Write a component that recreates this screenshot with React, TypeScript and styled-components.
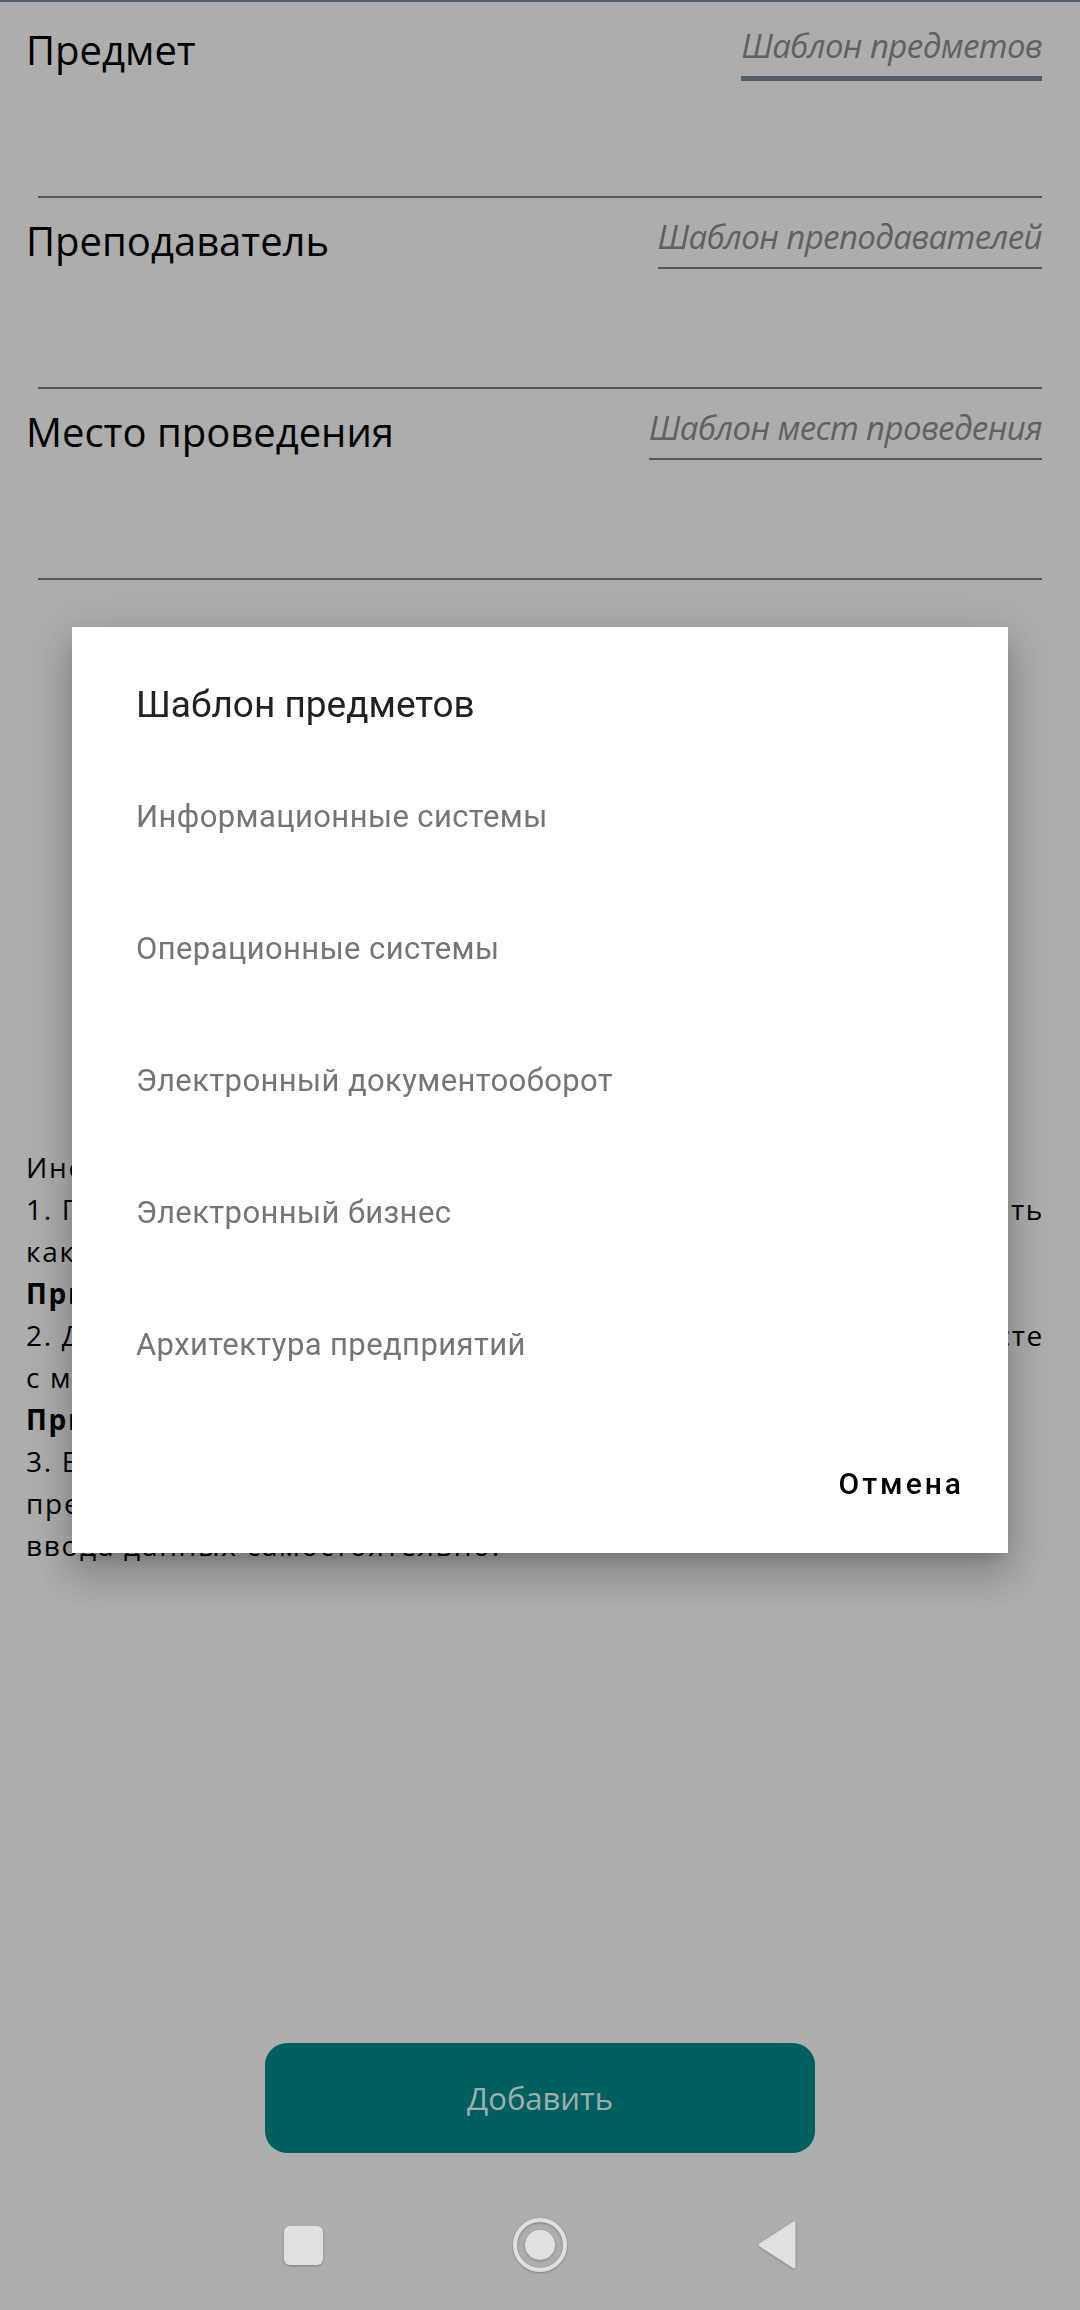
import React from 'react';
import styled, { createGlobalStyle } from 'styled-components';

// Template choices shown in the dialog
const subjectTemplates = [
  'Информационные системы',
  'Операционные системы',
  'Электронный документооборот',
  'Электронный бизнес',
  'Архитектура предприятий',
];

interface Field {
  label: string;
  template: string;
  active?: boolean;
}

const fields: Field[] = [
  { label: 'Предмет', template: 'Шаблон предметов', active: true },
  { label: 'Преподаватель', template: 'Шаблон преподавателей' },
  { label: 'Место проведения', template: 'Шаблон мест проведения' },
];

const GlobalStyle = createGlobalStyle`
  html, body {
    margin: 0;
    padding: 0;
    background: #ffffff;
  }
  body {
    font-family: 'Open Sans', 'Noto Sans', sans-serif;
    color: #000000;
  }
  * {
    box-sizing: border-box;
  }
`;

const App: React.FC = () => {
  return (
    <>
      <GlobalStyle />
      <Screen>
        <Form>
          {fields.map((field) => (
            <FieldBlock key={field.label}>
              <FieldHeader>
                <Label>{field.label}</Label>
                <TemplateLink $active={field.active}>{field.template}</TemplateLink>
              </FieldHeader>
              <FieldInput type="text" aria-label={field.label} />
            </FieldBlock>
          ))}
        </Form>

        <Instructions>
          <InstructionLine>Инструкция по заполнению полей:</InstructionLine>
          <InstructionLine $fill>
            <span>1. Поле «Предмет» можно выбрать из шаблона или</span> <span>заполнить</span>
          </InstructionLine>
          <InstructionLine>как угодно самостоятельно.</InstructionLine>
          <InstructionLine>
            <strong>Пример:</strong> «Информационные системы».
          </InstructionLine>
          <InstructionLine $fill>
            <span>2. Для полей «Преподаватель» и «Место проведения» в</span> <span>тексте</span>
          </InstructionLine>
          <InstructionLine>с маленькой буквы сокращения не используются.</InstructionLine>
          <InstructionLine>
            <strong>Пример:</strong> «доц. Иванов И.И.», «ауд. 305».
          </InstructionLine>
          <InstructionLine>3. Если нужного шаблона нет в списке, вы можете указать</InstructionLine>
          <InstructionLine>предмет, преподавателя и место проведения в полях</InstructionLine>
          <InstructionLine>ввода данных самостоятельно.</InstructionLine>
        </Instructions>

        <Spacer />

        <ButtonRow>
          <AddButton type="button">Добавить</AddButton>
        </ButtonRow>

        <NavBar>
          <svg width="41" height="41" viewBox="0 0 41 41">
            <rect x="1" y="1" width="39" height="39" rx="6" fill="#e0e0e0" />
          </svg>
          <svg width="56" height="56" viewBox="0 0 56 56">
            <circle cx="28" cy="28" r="25" fill="none" stroke="#e0e0e0" strokeWidth="4" />
            <circle cx="28" cy="28" r="15" fill="#e0e0e0" />
          </svg>
          <svg width="40" height="48" viewBox="0 0 40 48">
            <path
              d="M3 24 L37 2 L37 46 Z"
              fill="#e0e0e0"
              stroke="#e0e0e0"
              strokeWidth="3"
              strokeLinejoin="round"
            />
          </svg>
        </NavBar>
      </Screen>

      <Scrim>
        <Dialog role="dialog" aria-labelledby="dialog-title">
          <DialogTitle id="dialog-title">Шаблон предметов</DialogTitle>
          <OptionList>
            {subjectTemplates.map((item) => (
              <OptionItem key={item}>{item}</OptionItem>
            ))}
          </OptionList>
          <DialogFooter>
            <CancelButton type="button">Отмена</CancelButton>
          </DialogFooter>
        </Dialog>
      </Scrim>
    </>
  );
};

export default App;

const Screen = styled.div`
  width: 1080px;
  min-height: 100vh;
  display: flex;
  flex-direction: column;
  border-top: 2px solid #7c879c;
  background: #ffffff;
`;

const Form = styled.div`
  padding: 5px 38px 0 26px;
`;

const FieldBlock = styled.div`
  padding-top: 16px;
`;

const FieldHeader = styled.div`
  height: 58px;
  display: flex;
  justify-content: space-between;
  align-items: flex-start;
`;

const Label = styled.span`
  font-size: 40px;
  line-height: 1.362;
  color: #000000;
`;

const TemplateLink = styled.span<{ $active?: boolean }>`
  margin-top: 1px;
  font-size: 33px;
  line-height: 1.362;
  letter-spacing: -0.6px;
  font-style: italic;
  color: #8e8e8e;
  padding-bottom: 7px;
  border-bottom: ${(p) => (p.$active ? '5px solid #7c899a' : '2px solid #808080')};
`;

const FieldInput = styled.input`
  display: block;
  width: calc(100% - 12px);
  height: 117px;
  margin: 0 0 0 12px;
  padding: 0;
  border: none;
  border-bottom: 2px solid #808080;
  background: transparent;
  outline: none;
`;

const Instructions = styled.div`
  margin-top: 566px;
  padding: 0 36px 0 26px;
  font-size: 28px;
  line-height: 42px;
  letter-spacing: 1.7px;
  color: #000000;

  strong {
    font-weight: 700;
  }
`;

// Lines that run to the right edge keep their last word flush right
const InstructionLine = styled.div<{ $fill?: boolean }>`
  display: ${(p) => (p.$fill ? 'flex' : 'block')};
  justify-content: space-between;
  white-space: ${(p) => (p.$fill ? 'nowrap' : 'normal')};
`;

const Spacer = styled.div`
  flex: 1;
`;

const ButtonRow = styled.div`
  display: flex;
  justify-content: center;
  padding-bottom: 27px;
`;

const AddButton = styled.button`
  width: 550px;
  height: 110px;
  border: none;
  border-radius: 22px;
  background: #008c8c;
  color: #eaffff;
  font-family: 'Open Sans', 'Noto Sans', sans-serif;
  font-size: 31px;
`;

const NavBar = styled.div`
  position: relative;
  z-index: 20;
  height: 130px;
  display: grid;
  grid-template-columns: repeat(3, 237px);
  justify-content: center;
  justify-items: center;
  align-items: center;

  svg {
    filter: drop-shadow(0 1px 1px rgba(0, 0, 0, 0.25));
  }
`;

const Scrim = styled.div`
  position: fixed;
  inset: 0;
  z-index: 10;
  background: rgba(0, 0, 0, 0.32);
  display: flex;
  align-items: center;
  justify-content: center;
  padding-bottom: 130px;
`;

const Dialog = styled.div`
  width: 936px;
  background: #ffffff;
  padding: 57px 0 0 64px;
  box-shadow: 0 11px 15px -7px rgba(0, 0, 0, 0.2), 0 24px 38px 3px rgba(0, 0, 0, 0.14),
    0 9px 46px 8px rgba(0, 0, 0, 0.12);
  font-family: Roboto, 'Noto Sans', sans-serif;
`;

const DialogTitle = styled.h2`
  margin: 0;
  font-size: 37px;
  font-weight: 400;
  line-height: 1.14;
  color: #212121;
`;

const OptionList = styled.ul`
  list-style: none;
  margin: 25px 0 0;
  padding: 0;
`;

const OptionItem = styled.li`
  height: 132px;
  display: flex;
  align-items: center;
  font-size: 31px;
  line-height: 1.1;
  letter-spacing: 0.4px;
  color: #757575;
`;

const DialogFooter = styled.div`
  display: flex;
  justify-content: flex-end;
  padding: 24px 44px 22px 0;
`;

const CancelButton = styled.button`
  height: 96px;
  padding: 0;
  border: none;
  background: none;
  font-family: Roboto, 'Noto Sans', sans-serif;
  font-size: 30px;
  font-weight: 500;
  letter-spacing: 0.1em;
  color: #000000;
`;
